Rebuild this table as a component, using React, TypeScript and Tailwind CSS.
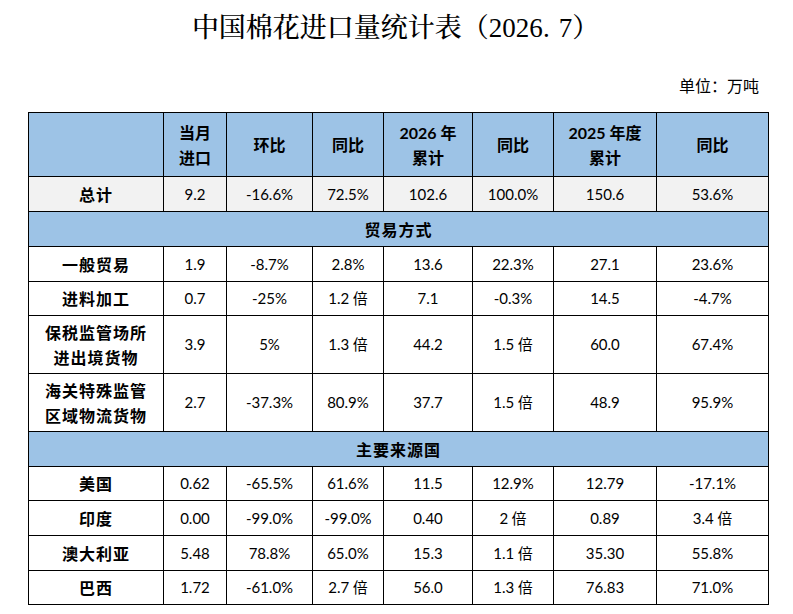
import React from "react";

const num = "font-['Lato','Noto_Sans_CJK_SC',sans-serif] text-[15px] text-black";
const lab = "font-['Noto_Sans_CJK_SC',sans-serif] font-bold text-[16px] text-black";

type Row = { label: string[]; vals: string[] };

const trade: Row[] = [
  { label: ["一般贸易"], vals: ["1.9", "-8.7%", "2.8%", "13.6", "22.3%", "27.1", "23.6%"] },
  { label: ["进料加工"], vals: ["0.7", "-25%", "1.2 倍", "7.1", "-0.3%", "14.5", "-4.7%"] },
  { label: ["保税监管场所", "进出境货物"], vals: ["3.9", "5%", "1.3 倍", "44.2", "1.5 倍", "60.0", "67.4%"] },
  { label: ["海关特殊监管", "区域物流货物"], vals: ["2.7", "-37.3%", "80.9%", "37.7", "1.5 倍", "48.9", "95.9%"] },
];

const origin: Row[] = [
  { label: ["美国"], vals: ["0.62", "-65.5%", "61.6%", "11.5", "12.9%", "12.79", "-17.1%"] },
  { label: ["印度"], vals: ["0.00", "-99.0%", "-99.0%", "0.40", "2 倍", "0.89", "3.4 倍"] },
  { label: ["澳大利亚"], vals: ["5.48", "78.8%", "65.0%", "15.3", "1.1 倍", "35.30", "55.8%"] },
  { label: ["巴西"], vals: ["1.72", "-61.0%", "2.7 倍", "56.0", "1.3 倍", "76.83", "71.0%"] },
];

function Val({ v }: { v: string }) {
  if (v.endsWith(" 倍")) {
    return (
      <span>
        {v.slice(0, -2)}
        <span className="font-['Noto_Sans_CJK_SC',sans-serif] text-[15px]"> 倍</span>
      </span>
    );
  }
  return <span>{v}</span>;
}

function DataRow({ r, bg }: { r: Row; bg: string }) {
  return (
    <>
      <div className={`${bg} ${lab} flex flex-col items-center justify-center leading-[25px] tracking-[1px]`}>
        {r.label.map((l) => (
          <span key={l}>{l}</span>
        ))}
      </div>
      {r.vals.map((v, i) => (
        <div key={i} className={`${bg} ${num} flex items-center justify-center`}>
          <Val v={v} />
        </div>
      ))}
    </>
  );
}

function HeadCell({ lines }: { lines: string[] }) {
  return (
    <div className="bg-[#9dc3e6] flex flex-col items-center justify-center leading-[25px] font-['Lato','Noto_Sans_CJK_SC',sans-serif] font-bold text-[16px] text-black">
      {lines.map((l) => (
        <span key={l}>{l}</span>
      ))}
    </div>
  );
}

export default function App() {
  return (
    <div className="w-[793px] h-[614px] bg-white overflow-hidden flex flex-col">
      <div className="h-[52px] flex items-center justify-center pt-[4px] pr-[2px]">
        <span className="font-['Liberation_Serif','Noto_Serif_CJK_SC','Noto_Sans_CJK_SC',serif] font-medium text-[27px] text-black leading-none">
          中国棉花进口量统计表（2026<span className="mr-[9px]">.</span>7）
        </span>
      </div>
      <div className="h-[60px] flex items-center justify-end pt-[6px] pr-[34px]">
        <span className="font-['Noto_Sans_CJK_SC',sans-serif] text-[16px] text-black">单位：万吨</span>
      </div>
      <div className="ml-[28px] w-fit grid grid-cols-[134px_62px_85px_70px_88px_80px_102px_111px] grid-rows-[63px_34px_34px_34px_33px_57px_57px_34px_33px_34px_34px_33px] gap-px bg-black p-px">
        <div className="bg-[#9dc3e6]" />
        <HeadCell lines={["当月", "进口"]} />
        <HeadCell lines={["环比"]} />
        <HeadCell lines={["同比"]} />
        <HeadCell lines={["2026 年", "累计"]} />
        <HeadCell lines={["同比"]} />
        <HeadCell lines={["2025 年度", "累计"]} />
        <HeadCell lines={["同比"]} />

        <DataRow r={{ label: ["总计"], vals: ["9.2", "-16.6%", "72.5%", "102.6", "100.0%", "150.6", "53.6%"] }} bg="bg-[#f2f2f2]" />

        <div className={`col-span-8 bg-[#9dc3e6] ${lab} flex items-center justify-center tracking-[1px]`}>贸易方式</div>
        {trade.map((r) => (
          <DataRow key={r.label.join()} r={r} bg="bg-white" />
        ))}

        <div className={`col-span-8 bg-[#9dc3e6] ${lab} flex items-center justify-center tracking-[1px]`}>主要来源国</div>
        {origin.map((r) => (
          <DataRow key={r.label.join()} r={r} bg="bg-white" />
        ))}
      </div>
    </div>
  );
}
